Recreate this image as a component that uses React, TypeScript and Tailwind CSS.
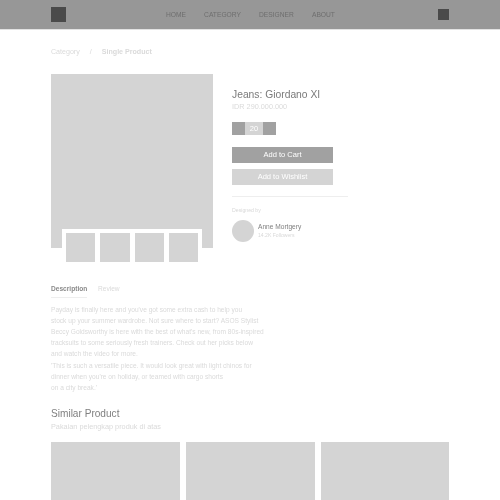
const navLinks = ["HOME", "CATEGORY", "DESIGNER", "ABOUT"]
const thumbs = [1, 2, 3, 4]
const similar = [1, 2, 3]

export default function App() {
  return (
    <div className="h-[500px] w-[500px] overflow-hidden bg-white font-['Liberation_Sans',Arial,sans-serif] blur-[0.5px]">
      {/* Navbar */}
      <header className="flex h-[30px] items-start border-b border-[#e2e2e2] bg-[#979797] pl-[51px] pr-[51px]">
        <div className="mt-[7px] h-[15px] w-[15px] bg-[#4a4a4a]" />
        <nav className="ml-[100px] mt-[10.5px] flex gap-[18px] text-[6.7px] leading-[8px] text-[#6e6e6e]">
          {navLinks.map((link) => (
            <span key={link}>{link}</span>
          ))}
        </nav>
        <div className="ml-auto mt-[9px] h-[11px] w-[11px] bg-[#4a4a4a]" />
      </header>

      {/* Breadcrumb */}
      <div className="mt-[18px] flex px-[51px] text-[7.1px] leading-[9px] text-[#dadada]">
        <span>Category</span>
        <span className="ml-[10px]">/</span>
        <span className="ml-[10px] font-bold">Single Product</span>
      </div>

      {/* Product */}
      <div className="mt-[17px] flex px-[51px]">
        <div className="relative h-[174px] w-[162px] bg-[#d4d4d4]">
          <div className="absolute left-[11px] top-[155px] flex h-[33px] w-[140px] gap-[5px] bg-white pl-[4px] pt-[4px]">
            {thumbs.map((t) => (
              <div key={t} className="h-[29px] w-[29.3px] bg-[#d4d4d4]" />
            ))}
          </div>
        </div>

        <div className="ml-[19px] w-[116px]">
          <h1 className="mt-[14px] text-[10.3px] leading-[13px] text-[#7a7a7a]">Jeans: Giordano XI</h1>
          <p className="mt-[1px] text-[7.3px] leading-[10px] text-[#dadada]">IDR 290.000.000</p>

          <div className="mt-[10px] flex h-[13px] w-[44px] text-[7.5px] leading-[13px]">
            <div className="w-[13px] bg-[#a1a1a1]" />
            <div className="w-[18px] bg-[#d4d4d4] text-center text-white">20</div>
            <div className="w-[13px] bg-[#a1a1a1]" />
          </div>

          <button className="mt-[12px] block h-[16px] w-[101px] bg-[#a1a1a1] text-center text-[7.5px] text-white">
            Add to Cart
          </button>
          <button className="mt-[6px] block h-[16px] w-[101px] bg-[#d4d4d4] text-center text-[7.5px] text-white">
            Add to Wishlist
          </button>

          <div className="mt-[11px] h-px w-full bg-[#eeeeee]" />

          <p className="mt-[10px] text-[5.2px] leading-[7px] text-[#d8d8d8]">Designed by</p>
          <div className="mt-[6px] flex items-center">
            <div className="h-[22px] w-[22px] rounded-full bg-[#d4d4d4]" />
            <div className="ml-[4px] -mt-px">
              <p className="text-[6.6px] leading-[9px] text-[#808080]">Anne Mortgery</p>
              <p className="mt-[1.5px] text-[5.1px] leading-[7px] text-[#d8d8d8]">14.2K Followers</p>
            </div>
          </div>
        </div>
      </div>

      {/* Tabs */}
      <div className="mt-[36px] flex px-[51px] text-[6.6px] leading-[9px]">
        <div className="w-[36px] border-b border-[#eeeeee] pb-[4px] font-bold text-[#8a8a8a]">Description</div>
        <div className="ml-[11px] text-[#dadada]">Review</div>
      </div>

      {/* Description */}
      <div className="mt-[6px] px-[51px] text-[6.6px] leading-[11px] text-[#dadada]">
        <p>
          Payday is finally here and you've got some extra cash to help you
          <br />
          stock up your summer wardrobe. Not sure where to start? ASOS Stylist
          <br />
          Beccy Goldsworthy is here with the best of what's new, from 80s-inspired
          <br />
          tracksuits to some seriously fresh trainers. Check out her picks below
          <br />
          and watch the video for more.
        </p>
        <p className="mt-px">
          'This is such a versatile piece. It would look great with light chinos for
          <br />
          dinner when you're on holiday, or teamed with cargo shorts
          <br />
          on a city break.'
        </p>
      </div>

      {/* Similar */}
      <div className="mt-[14px] px-[51px]">
        <h2 className="text-[10.1px] leading-[13px] text-[#808080]">Similar Product</h2>
        <p className="mt-[1px] text-[7.3px] leading-[11px] text-[#dadada]">Pakaian pelengkap produk di atas</p>
        <div className="mt-[10px] grid w-[398.5px] grid-cols-3 gap-[6px]">
          {similar.map((s) => (
            <div key={s} className="h-[100px] bg-[#d4d4d4]" />
          ))}
        </div>
      </div>
    </div>
  )
}
